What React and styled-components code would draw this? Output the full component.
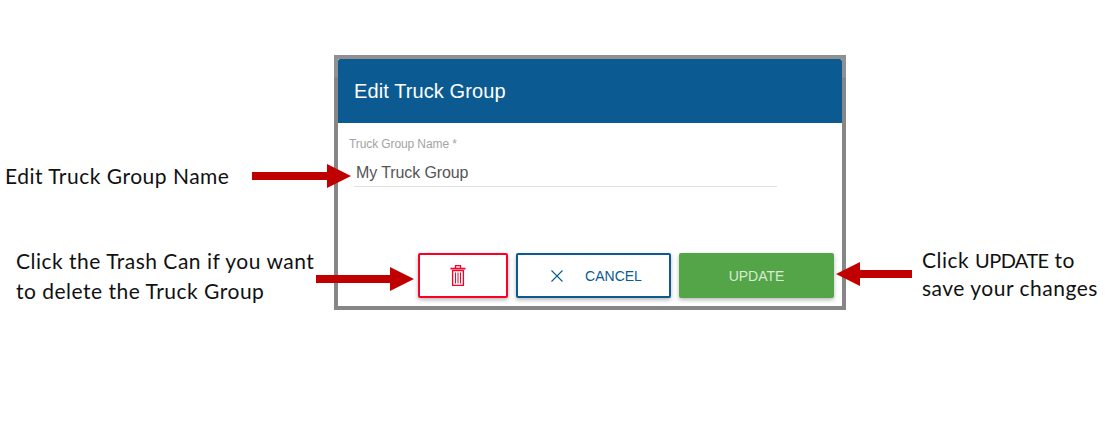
import styled, { createGlobalStyle } from "styled-components";

const GlobalStyle = createGlobalStyle`
  html, body {
    margin: 0;
    background: #fff;
  }
`;

const Page = styled.div`
  position: relative;
  display: grid;
  grid-template-columns: 334px 512px 1fr;
  width: 1110px;
  height: 421px;
  overflow: hidden;
  font-family: Lato, sans-serif;
  color: #111;
`;

const Notes = styled.div`
  display: flex;
  flex-direction: column;
  padding-top: ${(p) => p.$top}px;
  gap: ${(p) => p.$gap || 0}px;
`;

const Note = styled.div`
  margin-left: ${(p) => p.$left || 0}px;
  font-size: 21px;
  letter-spacing: 0.5px;
  line-height: ${(p) => p.$leading || 30}px;
  white-space: nowrap;
`;

const NoteCaps = styled.span`
  font-size: 20px;
  letter-spacing: -0.6px;
`;

const Frame = styled.div`
  align-self: start;
  margin-top: 55px;
  height: 255px;
  box-sizing: border-box;
  padding: 4px;
  background: linear-gradient(#909090 0 23px, #7f7f7f 23px 24px, #868686 24px);
`;

const Dialog = styled.div`
  display: flex;
  flex-direction: column;
  height: 100%;
  background: #fff;
  font-family: "Liberation Sans", Arial, sans-serif;
`;

const Header = styled.div`
  height: 64px;
  box-sizing: border-box;
  padding: 0 16px;
  display: flex;
  align-items: center;
  background: #0b5a92;
  border-radius: 2px 2px 0 0;
  color: #fff;
  font-size: 20px;
  letter-spacing: 0.1px;
`;

const Field = styled.div`
  flex: 1;
  padding: 14px 0 0 11px;
`;

const FieldLabel = styled.div`
  font-size: 12px;
  letter-spacing: -0.1px;
  line-height: 14px;
  color: #a3a3a3;
`;

const FieldInput = styled.div`
  width: 423px;
  box-sizing: border-box;
  margin: 10px 0 0 5px;
  padding: 0 0 2px 2px;
  border-bottom: 1px solid #e0e0e0;
  font-size: 16px;
  letter-spacing: -0.1px;
  line-height: 23px;
  color: #555;
`;

const Actions = styled.div`
  display: flex;
  justify-content: flex-end;
  gap: 8px;
  padding: 0 8px 8px 0;
`;

const Button = styled.div`
  width: ${(p) => p.$width}px;
  height: 45px;
  box-sizing: border-box;
  display: flex;
  align-items: center;
  justify-content: center;
  gap: 22px;
  padding-left: ${(p) => p.$insetLeft || 0}px;
  padding-right: ${(p) => p.$insetRight || 0}px;
  border: 2px solid ${(p) => p.$color};
  border-radius: 2px;
  background: ${(p) => (p.$filled ? p.$color : "#fff")};
  color: ${(p) => (p.$filled ? "#d9ebd4" : p.$color)};
  font-size: 14px;
  box-shadow: 0 2px 4px rgba(0, 0, 0, 0.28);
`;

const Arrow = styled.svg`
  position: absolute;
  left: ${(p) => p.$x}px;
  top: ${(p) => p.$y}px;
`;

const TrashIcon = () => (
  <svg width="16" height="21" viewBox="0 0 16 21" fill="none" stroke="#fa0026" strokeWidth="1.3">
    <path d="M5.5 3V.7h5V3" />
    <path d="M.5 3.6h15" strokeWidth="1.8" />
    <path d="M2.6 5.6h10.8v14.8H2.6z" />
    <path d="M5.5 7.5v11M8 7.5v11M10.5 7.5v11" strokeWidth="1" />
  </svg>
);

const CloseIcon = () => (
  <svg width="12" height="12" viewBox="0 0 12 12" fill="none" stroke="#0b5a92" strokeWidth="1.1">
    <path d="M.5.5l11 11M11.5.5l-11 11" />
  </svg>
);

// left and right pointing callout arrows
const RightArrow = ({ x, y, width }) => (
  <Arrow $x={x} $y={y} width={width} height="24" viewBox={`0 0 ${width} 24`}>
    <polygon fill="#c00000" points={`0,8 ${width - 24},8 ${width - 24},0 ${width},12 ${width - 24},24 ${width - 24},16 0,16`} />
  </Arrow>
);

const LeftArrow = ({ x, y, width }) => (
  <Arrow $x={x} $y={y} width={width} height="24" viewBox={`0 0 ${width} 24`}>
    <polygon fill="#c00000" points={`${width},8 24,8 24,0 0,12 24,24 24,16 ${width},16`} />
  </Arrow>
);

const App = () => {
  return (
    <Page>
      <GlobalStyle />
      <Notes $top={161} $gap={55}>
        <Note $left={5}>Edit Truck Group Name</Note>
        <Note $left={16}>
          Click the Trash Can if you want
          <br />
          to delete the Truck Group
        </Note>
      </Notes>
      <Frame>
        <Dialog>
          <Header>Edit Truck Group</Header>
          <Field>
            <FieldLabel>Truck Group Name *</FieldLabel>
            <FieldInput>My Truck Group</FieldInput>
          </Field>
          <Actions>
            <Button $width={90} $color="#fa0026" $insetRight={11}>
              <TrashIcon />
            </Button>
            <Button $width={155} $color="#0b5a92" $insetLeft={6}>
              <CloseIcon />
              <span>CANCEL</span>
            </Button>
            <Button $width={155} $color="#54a548" $filled>
              UPDATE
            </Button>
          </Actions>
        </Dialog>
      </Frame>
      <Notes $top={246}>
        <Note $left={76} $leading={28}>
          Click <NoteCaps>UPDATE</NoteCaps> to
          <br />
          save your changes
        </Note>
      </Notes>
      <RightArrow x={252} y={164} width={99} />
      <RightArrow x={316} y={267} width={98} />
      <LeftArrow x={836} y={262} width={76} />
    </Page>
  );
};

export default App;
